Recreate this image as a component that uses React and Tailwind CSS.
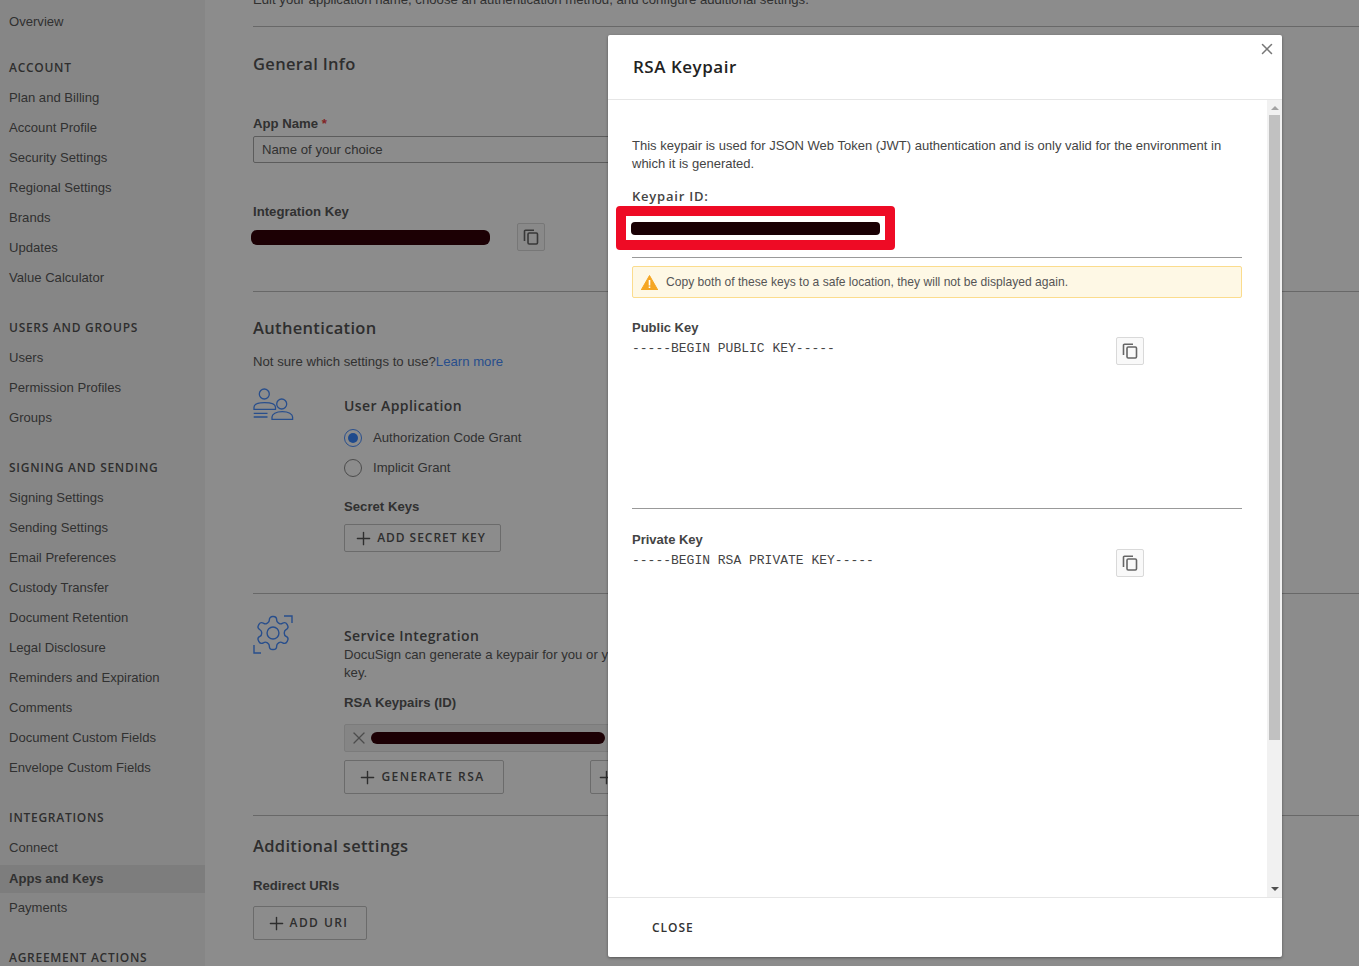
import React from "react";
import { Plus, X } from "lucide-react";

const HEADING = "font-['Open_Sans',sans-serif]";

const SIDE_MENU = [
  { title: "ACCOUNT", items: ["Plan and Billing", "Account Profile", "Security Settings", "Regional Settings", "Brands", "Updates", "Value Calculator"] },
  { title: "USERS AND GROUPS", items: ["Users", "Permission Profiles", "Groups"] },
  {
    title: "SIGNING AND SENDING",
    items: [
      "Signing Settings",
      "Sending Settings",
      "Email Preferences",
      "Custody Transfer",
      "Document Retention",
      "Legal Disclosure",
      "Reminders and Expiration",
      "Comments",
      "Document Custom Fields",
      "Envelope Custom Fields",
    ],
  },
  { title: "INTEGRATIONS", items: ["Connect", "Apps and Keys", "Payments"] },
  { title: "AGREEMENT ACTIONS", items: [] },
];

const CopyIcon = () => (
  <svg width="16" height="16" viewBox="0 0 16 16" fill="none" stroke="currentColor" strokeWidth="1.6">
    <path d="M1.500 12V2.200a1 1 0 0 1 1-1H11" />
    <rect x="5" y="4" width="9.500" height="11" rx="1.200" />
  </svg>
);

const CopyButton = ({ className = "" }) => (
  <button className={`w-[28px] h-[28px] flex items-center justify-center rounded-[2px] border border-[#d9d9d9] bg-[#f9f9f9] text-[#666] ${className}`}>
    <CopyIcon />
  </button>
);

const UsersIcon = () => (
  <svg width="41" height="33" viewBox="0 0 41 33" fill="none" stroke="#4a8fff" strokeWidth="1.3" className="shrink-0">
    <circle cx="11.300" cy="6" r="5" />
    <path d="M1 21.300v-2c0-3 4-4.600 10.500-4.600s11 1.600 11 4.600v2z" />
    <path d="M0.700 25.300h13.800M0.700 29h13.800" />
    <circle cx="28.700" cy="16" r="5" />
    <path d="M19 31.300v-2.300c0-3 4-5.300 10.300-5.300s10.300 2.300 10.300 5.300v2.300z" />
  </svg>
);

const GearIcon = () => (
  <svg width="40" height="40" viewBox="0 0 40 40" fill="none" stroke="#4a8fff" strokeWidth="1.4" className="shrink-0">
    <path d="M31 1h8v7M1 30v8h7" />
    <g transform="translate(0.200 -1.800) scale(1.650)" strokeWidth="0.850">
      <path d="M12.220 2h-.44a2 2 0 0 0-2 2v.18a2 2 0 0 1-1 1.730l-.43.25a2 2 0 0 1-2 0l-.15-.08a2 2 0 0 0-2.730.73l-.22.38a2 2 0 0 0 .73 2.730l.15.1a2 2 0 0 1 1 1.720v.51a2 2 0 0 1-1 1.740l-.15.09a2 2 0 0 0-.73 2.730l.22.38a2 2 0 0 0 2.730.73l.15-.08a2 2 0 0 1 2 0l.43.25a2 2 0 0 1 1 1.730V20a2 2 0 0 0 2 2h.44a2 2 0 0 0 2-2v-.18a2 2 0 0 1 1-1.730l.43-.25a2 2 0 0 1 2 0l.15.08a2 2 0 0 0 2.730-.73l.22-.39a2 2 0 0 0-.73-2.730l-.15-.08a2 2 0 0 1-1-1.740v-.5a2 2 0 0 1 1-1.740l.15-.09a2 2 0 0 0 .73-2.730l-.22-.38a2 2 0 0 0-2.730-.73l-.15.08a2 2 0 0 1-2 0l-.43-.25a2 2 0 0 1-1-1.730V4a2 2 0 0 0-2-2z" />
      <circle cx="12" cy="12" r="3.600" />
    </g>
  </svg>
);

const OutlineButton = ({ children, className = "" }) => (
  <button className={`${HEADING} flex items-center justify-center gap-[3px] pr-[6px] rounded-[2px] border border-[#c4c4c4] text-[12px] font-semibold text-[#555] ${className}`}>
    <Plus size={21} strokeWidth={1.6} />
    {children}
  </button>
);

const SectionTitle = ({ children, className = "" }) => (
  <h2 className={`${HEADING} text-[16.500px] leading-[24px] font-semibold tracking-[0.02em] text-[#555] ${className}`}>{children}</h2>
);

const Sidebar = () => {
  return (
    <aside className="w-[205px] shrink-0 bg-[#f5f5f5] text-[13.100px] text-[#595959]">
      <div className="h-[30px] mt-[7px] pl-[9px] flex items-center">Overview</div>
      {SIDE_MENU.map((section, i) => (
        <div key={section.title} className={i === 0 ? "mt-[16px]" : "mt-[20px]"}>
          <h4 className={`${HEADING} h-[30px] pl-[9px] flex items-center text-[12px] font-semibold tracking-[0.06em] text-[#555]`}>{section.title}</h4>
          {section.items.map((item) =>
            item === "Apps and Keys" ? (
              <div key={item} className="mt-[2px] h-[28px] pl-[9px] flex items-center font-bold bg-[#e3e3e3]">
                {item}
              </div>
            ) : (
              <div key={item} className="h-[30px] pl-[9px] flex items-center">
                {item}
              </div>
            ),
          )}
        </div>
      ))}
    </aside>
  );
};

const Main = () => {
  return (
    <main className="flex-1 pl-[48px] text-[13.170px] text-[#595959]">
      <p className="-mt-[9px] h-[18px] leading-[18px]">Edit your application name, choose an authentication method, and configure additional settings.</p>
      <div className="mt-[17px] border-t border-[#bdbdbd]" />

      {/* general info */}
      <SectionTitle className="mt-[25px]">General Info</SectionTitle>
      <div className="mt-[39px] h-[18px] leading-[18px] font-bold">
        App Name <span className="text-[#e44]">*</span>
      </div>
      <input readOnly value="Name of your choice" className="mt-[3px] block w-[600px] h-[27px] px-[8px] rounded-[2px] border border-[#a8a8a8] bg-white text-[13.170px] text-[#595959]" />
      <div className="mt-[40px] h-[18px] leading-[18px] font-bold">Integration Key</div>
      <div className="mt-[2px] flex items-center">
        <div className="-ml-[2px] w-[239px] h-[15px] rounded-[6px] bg-[#330008]" />
        <CopyButton className="ml-[27px]" />
      </div>
      <div className="mt-[40px] border-t border-[#bdbdbd]" />

      {/* authentication */}
      <SectionTitle className="mt-[24px]">Authentication</SectionTitle>
      <p className="mt-[13px] h-[18px] leading-[18px]">
        Not sure which settings to use?<span className="text-[#4a8fff]">Learn more</span>
      </p>

      <div className="mt-[17px] flex">
        <UsersIcon />
        <div className="ml-[50px] pt-[9px]">
          <h3 className={`${HEADING} h-[18px] leading-[18px] text-[14px] font-semibold tracking-[0.03em] text-[#555]`}>User Application</h3>
          <div className="mt-[8px] h-[30px] flex items-center gap-[11px]">
            <span className="w-[18px] h-[18px] rounded-full border border-[#4a8fff] flex items-center justify-center bg-white">
              <span className="w-[10px] h-[10px] rounded-full bg-[#3a88ff]" />
            </span>
            Authorization Code Grant
          </div>
          <div className="h-[30px] flex items-center gap-[11px]">
            <span className="w-[18px] h-[18px] rounded-full border border-[#8a8a8a] bg-white" />
            Implicit Grant
          </div>
          <div className="mt-[15px] h-[18px] leading-[18px] font-bold">Secret Keys</div>
          <OutlineButton className="mt-[8px] w-[157px] h-[28px] tracking-[0.08em]">ADD SECRET KEY</OutlineButton>
        </div>
      </div>
      <div className="mt-[41px] border-t border-[#bdbdbd]" />

      {/* service integration */}
      <div className="mt-[21px] flex">
        <GearIcon />
        <div className="ml-[51px] pt-[12px]">
          <h3 className={`${HEADING} h-[18px] leading-[18px] text-[14px] font-semibold tracking-[0.03em] text-[#555]`}>Service Integration</h3>
          <p className="mt-[1px] w-[560px] leading-[18px]">
            DocuSign can generate a keypair for you or you can upload your own private
            <br />
            key.
          </p>
          <div className="mt-[12px] h-[18px] leading-[18px] font-bold">RSA Keypairs (ID)</div>
          <div className="mt-[12px] w-[500px] h-[28px] flex items-center rounded-[2px] border border-[#e0e0e0] bg-[#f2f2f2]">
            <X size={20} strokeWidth={1.500} className="ml-[4px] text-[#8a8a8a]" />
            <div className="ml-[2px] w-[234px] h-[12px] rounded-[6px] bg-[#330008]" />
          </div>
          <div className="mt-[8px] flex gap-[86px]">
            <OutlineButton className="w-[160px] h-[34px] tracking-[0.12em]">GENERATE RSA</OutlineButton>
            <OutlineButton className="w-[100px] h-[34px] tracking-[0.12em]">UPLOAD</OutlineButton>
          </div>
        </div>
      </div>
      <div className="mt-[21px] border-t border-[#bdbdbd]" />

      {/* additional settings */}
      <SectionTitle className="mt-[18px]">Additional settings</SectionTitle>
      <div className="mt-[19px] h-[18px] leading-[18px] font-bold">Redirect URIs</div>
      <OutlineButton className="mt-[11px] w-[114px] h-[34px] tracking-[0.12em]">ADD URI</OutlineButton>
    </main>
  );
};

const KeypairModal = () => {
  return (
    <div className="absolute inset-0 bg-black/45 pl-[608px] pt-[35px]">
      <div className="relative w-[674px] h-[922px] flex flex-col rounded-[2px] bg-white text-[13px] text-[#444] shadow-[0_1px_3px_rgba(0,0,0,0.4)]">
        <button className="absolute right-[6px] top-[5px] text-[#777]">
          <X size={18} strokeWidth={2} />
        </button>
        <div className="h-[65px] shrink-0 pl-[25px] flex items-center border-b border-[#e6e6e6]">
          <h2 className={`${HEADING} text-[17px] font-semibold tracking-[0.03em] text-[#222]`}>RSA Keypair</h2>
        </div>

        <div className="flex-1 min-h-0 flex">
          <div className="flex-1 overflow-hidden pl-[24px] pr-[25px] pt-[37px]">
            <p className="leading-[18px]">
              This keypair is used for JSON Web Token (JWT) authentication and is only valid for the environment in which it is generated.
            </p>
            <div className={`${HEADING} mt-[14px] h-[18px] leading-[18px] text-[13px] font-semibold tracking-[0.06em]`}>Keypair ID:</div>
            <div className="mt-[1px] -ml-[16px] w-[279px] h-[44px] rounded-[4px] border-[10px] border-[#ee0b25] flex items-center pl-[5px]">
              <div className="w-[249px] h-[13px] rounded-[4px] bg-[#1a0004]" />
            </div>
            <div className="mt-[7px] border-t border-[#999]" />
            <div className="mt-[8px] h-[32px] flex items-center gap-[8px] pl-[8px] rounded-[2px] border border-[#fbdc8d] bg-[#fef8e5] text-[12.100px] text-[#555]">
              <svg width="17" height="15" viewBox="0 0 17 15">
                <path d="M8.500 0.500 L16.800 15 H0.200 Z" fill="#f5a623" stroke="#f5a623" strokeLinejoin="round" />
                <path d="M7.700 5h1.600v5.500h-1.600zM7.700 11.500h1.600v1.600h-1.600z" fill="#fff" />
              </svg>
              Copy both of these keys to a safe location, they will not be displayed again.
            </div>

            <div className="mt-[21px] h-[18px] leading-[18px] font-bold">Public Key</div>
            <div className="relative mt-[3px] h-[168px]">
              <pre className="font-['Liberation_Mono',monospace] text-[13px] leading-[18px] text-[#444]">-----BEGIN PUBLIC KEY-----</pre>
              <CopyButton className="absolute left-[484px] -top-[3px]" />
            </div>
            <div className="border-t border-[#999]" />

            <div className="mt-[22px] h-[18px] leading-[18px] font-bold">Private Key</div>
            <div className="relative mt-[3px]">
              <pre className="font-['Liberation_Mono',monospace] text-[13px] leading-[18px] text-[#444]">-----BEGIN RSA PRIVATE KEY-----</pre>
              <CopyButton className="absolute left-[484px] -top-[3px]" />
            </div>
          </div>

          {/* scrollbar */}
          <div className="w-[15px] shrink-0 bg-[#f1f1f1] flex flex-col items-center px-[2px]">
            <div className="h-[15px] flex items-center">
              <div className="w-0 h-0 border-x-[4px] border-x-transparent border-b-[4px] border-b-[#a3a3a3]" />
            </div>
            <div className="w-[11px] h-[625px] bg-[#c1c1c1]" />
            <div className="flex-1" />
            <div className="h-[15px] pb-[2px] flex items-center">
              <div className="w-0 h-0 border-x-[4px] border-x-transparent border-t-[4px] border-t-[#505050]" />
            </div>
          </div>
        </div>

        <div className="h-[60px] shrink-0 pl-[44px] flex items-center border-t border-[#e6e6e6]">
          <span className={`${HEADING} text-[12px] font-semibold tracking-[0.08em] text-[#333]`}>CLOSE</span>
        </div>
      </div>
    </div>
  );
};

export default function App() {
  return (
    <div className="relative h-screen overflow-hidden flex bg-white font-['Liberation_Sans',sans-serif]">
      <Sidebar />
      <Main />
      <KeypairModal />
    </div>
  );
}
